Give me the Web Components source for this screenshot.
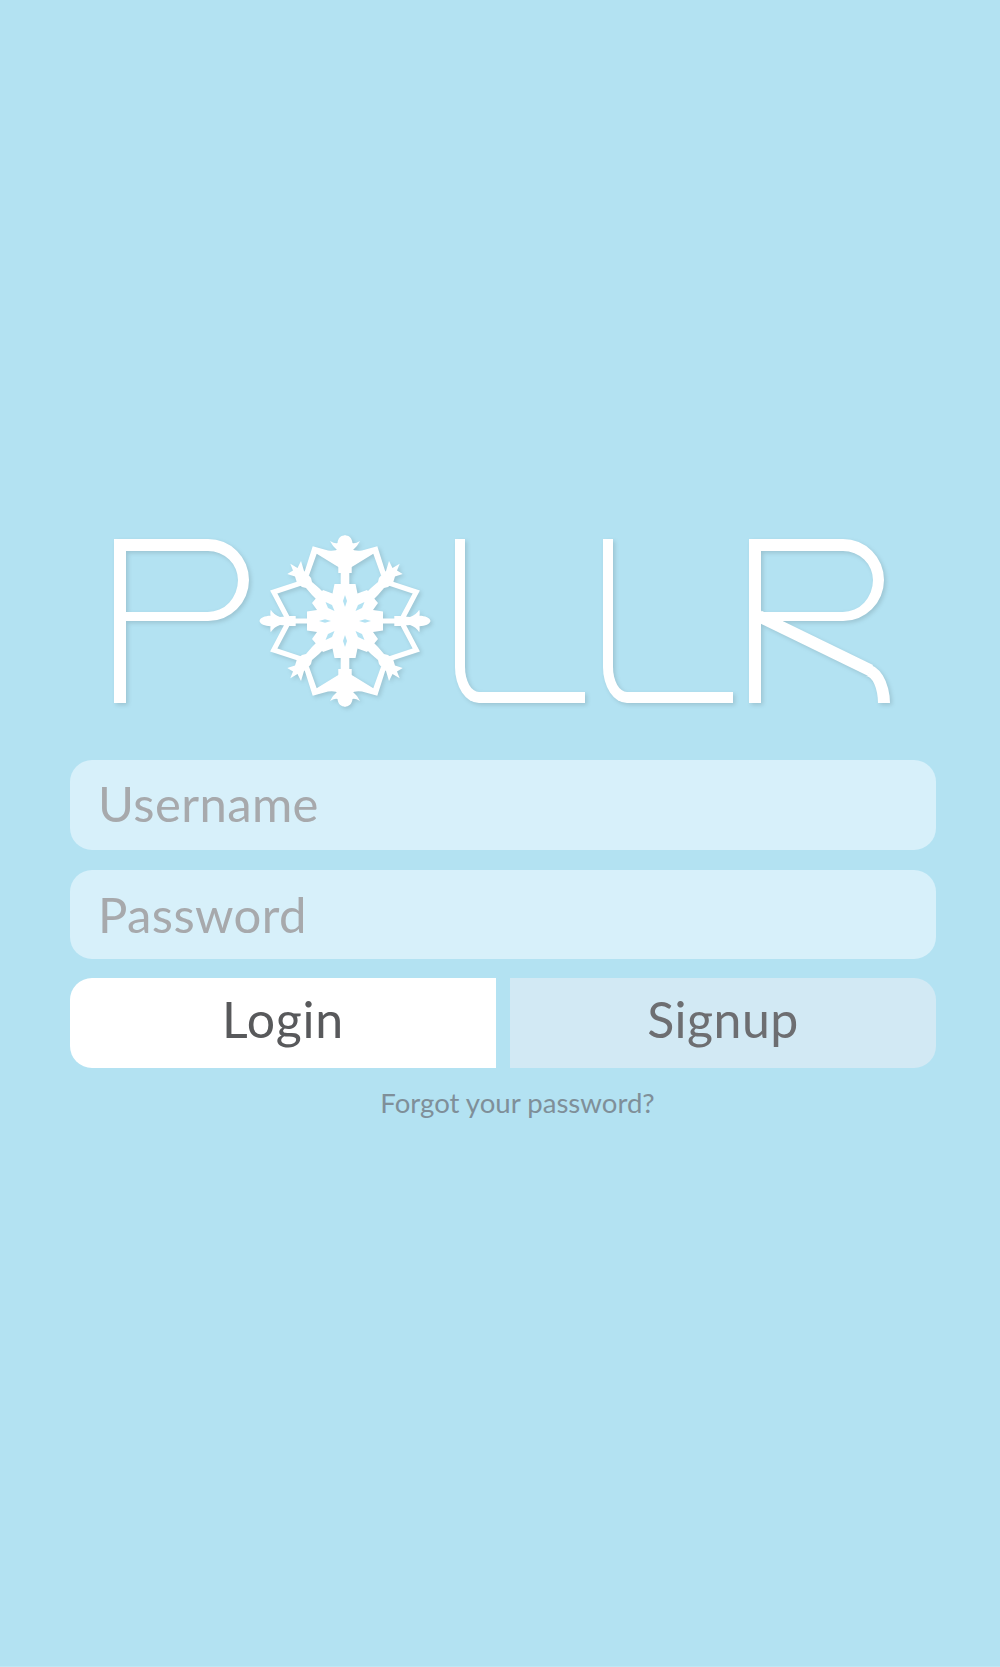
<!DOCTYPE html>
<html lang="en">
<head>
<meta charset="utf-8">
<title>Pollr</title>
<style>
  html, body { margin: 0; background: #b3e2f2; }
  body { font-family: "Lato", "Liberation Sans", sans-serif; }
</style>
</head>
<body>
<pollr-login>
  <pollr-logo slot="logo"></pollr-logo>
  <login-field>Username</login-field>
  <login-field class="second">Password</login-field>
  <login-buttons slot="buttons">
    <login-button class="primary" corner="left">Login</login-button>
    <login-button corner="right">Signup</login-button>
  </login-buttons>
  <forgot-link slot="forgot">Forgot your password?</forgot-link>
</pollr-login>

<script>
class PollrLogin extends HTMLElement {
  constructor(){
    super();
    this.attachShadow({mode: 'open'});
  }

  connectedCallback(){
    this.shadowRoot.innerHTML = `
      <style>
        :host {
          display: flex;
          flex-direction: column;
          box-sizing: border-box;
          width: 1000px;
          height: 1667px;
          padding: 535px 0 0 70px;
          background: #b3e2f2;
          border-bottom: 1px solid #bfe7f5;
          overflow: hidden;
        }
        ::slotted(login-field) {
          height: 90px;
          margin-top: 20px;
          padding-bottom: 5px;
        }
        ::slotted(login-field.second) {
          height: 89px;
          padding-bottom: 2px;
        }
      </style>
      <slot name="logo"></slot>
      <slot></slot>
      <slot name="buttons"></slot>
      <slot name="forgot"></slot>
    `;
  }
}

// the wordmark is custom artwork, built out of bordered boxes
class PollrLogo extends HTMLElement {
  constructor(){
    super();
    this.attachShadow({mode: 'open'});
  }

  connectedCallback(){
    this.shadowRoot.innerHTML = `
      <style>
        :host {
          display: flex;
          align-items: flex-start;
          height: 172px;
          margin: 0 0 33px 44px;
          filter: drop-shadow(2px 2px 2px rgba(0,0,0,.13));
        }
        .letter {
          position: relative;
          margin-top: 4px;
          height: 164px;
          flex: none;
        }
        .bowl {
          box-sizing: border-box;
          width: 135px;
          height: 82px;
          border: solid #fff;
          border-width: 12px 11px 9px 12px;
          border-radius: 0 41px 41px 0;
        }
        .stem {
          width: 12px;
          height: 82px;
          background: #fff;
        }
        .l {
          box-sizing: border-box;
          width: 130px;
          border-left: 10px solid #fff;
          border-bottom: 11px solid #fff;
          border-bottom-left-radius: 24px 36px;
        }
        .leg {
          position: absolute;
          left: -0.1px;
          top: 126.2px;
          width: 124px;
          height: 11.8px;
          background: #fff;
          transform-origin: 100% 0;
          transform: rotate(26deg);
        }
        .knee {
          position: absolute;
          box-sizing: border-box;
          left: 92.3px;
          top: 124.5px;
          width: 49px;
          height: 79px;
          border: 12px solid #fff;
          border-radius: 50%;
          clip-path: polygon(26px 12.7px, 31px 0, 49px 0, 49px 39.5px, 24.5px 39.5px, 24.5px 12.7px);
        }
        pollr-snowflake { margin: 0 24px 0 10px; }
        .l.first { margin-right: 18px; }
        .l.last { margin-right: 16px; }
      </style>
      <div class="letter" role="img" aria-label="P">
        <div class="bowl"></div>
        <div class="stem"></div>
      </div>
      <pollr-snowflake></pollr-snowflake>
      <div class="letter l first" role="img" aria-label="L"></div>
      <div class="letter l last" role="img" aria-label="L"></div>
      <div class="letter" role="img" aria-label="R">
        <div class="bowl"></div>
        <div class="stem"></div>
        <div class="leg"></div>
        <div class="knee"></div>
      </div>
    `;
  }
}

class PollrSnowflake extends HTMLElement {
  constructor(){
    super();
    this.attachShadow({mode: 'open'});
  }

  connectedCallback(){
    this.shadowRoot.innerHTML = `
      <style>
        :host {
          display: block;
          flex: none;
          width: 172px;
          height: 172px;
        }
        svg { display: block; }
      </style>
      <svg width="172" height="172" viewBox="-86 -86 172 172" role="img" aria-label="snowflake">
        <defs>
          <g id="quarter" fill="#fff">
            <polygon points="0.5,0.5 0.5,-37 -10.5,-37 -12.5,-27.5 -22,-31 -33,-18 -28,-11 -38,-9.5 -38,0.5"/>
            <path d="M0.5-85.7C-4-85.7-7-83-7.5-78Q-10-77-15-80-12-74-8-71L-6.7-54-6.7-48-4.3-48-4.3-35 0.5-35Z"/>
            <path d="M-85.3 0C-85.3-3-80-5.2-74.5-5.2Q-75-8-74.3-11.3-71-6-65-4L-54.3-5-49.3-5-49.3-2.5-36-2.5-36 0.5-85.3 0.5Z"/>
            <polygon points="-44,-60 -47.5,-53 -54.7,-57.3 -52,-50.5 -57.7,-47 -50,-44.5 -48,-38 -43,-34 -39,-33 -33,-26 -25,-18 -18,-25 -26,-33 -33,-39 -34,-43 -38,-48 -41,-50"/>
            <path d="M-32.3-74.7-17-70.5Q-10-69.5-6-72L-5-53-10-56-28.3-67.3-36-45.7-41-47.3Z"/>
            <polyline points="-42.7,-38.3 -71.3,-29 -57,-2" fill="none" stroke="#fff" stroke-width="5"/>
          </g>
        </defs>
        <use href="#quarter"/>
        <use href="#quarter" transform="scale(-1,1)"/>
        <use href="#quarter" transform="scale(1,-1)"/>
        <use href="#quarter" transform="scale(-1,-1)"/>
        <g fill="#b3e2f2">
          <polygon points="0,-26 2,-20 0,-14 -2,-20"/>
          <polygon points="0,26 2,20 0,14 -2,20"/>
          <polygon points="-26,0 -20,1.8 -14,0 -20,-1.8"/>
          <polygon points="26,0 20,1.8 14,0 20,-1.8"/>
          <polygon points="-19.5,-19 -13,-16 -10.5,-10 -17,-13"/>
          <polygon points="19.5,-19 13,-16 10.5,-10 17,-13"/>
          <polygon points="-19.5,19 -13,16 -10.5,10 -17,13"/>
          <polygon points="19.5,19 13,16 10.5,10 17,13"/>
        </g>
      </svg>
    `;
  }
}

class LoginField extends HTMLElement {
  constructor(){
    super();
    this.attachShadow({mode: 'open'});
  }

  connectedCallback(){
    this.shadowRoot.innerHTML = `
      <style>
        :host {
          display: flex;
          align-items: center;
          box-sizing: border-box;
          width: 866px;
          padding-left: 28px;
          background: #d7f0fa;
          border-radius: 22px;
          color: #a7a9ac;
          font-size: 49px;
          letter-spacing: .4px;
        }
      </style>
      <slot></slot>
    `;
  }
}

class LoginButtons extends HTMLElement {
  constructor(){
    super();
    this.attachShadow({mode: 'open'});
  }

  connectedCallback(){
    this.shadowRoot.innerHTML = `
      <style>
        :host {
          display: flex;
          gap: 14px;
          width: 866px;
          height: 90px;
          margin-top: 19px;
        }
      </style>
      <slot></slot>
    `;
  }
}

class LoginButton extends HTMLElement {
  constructor(){
    super();
    this.attachShadow({mode: 'open'});
  }

  connectedCallback(){
    this.shadowRoot.innerHTML = `
      <style>
        :host {
          display: flex;
          flex: 1;
          align-items: center;
          justify-content: center;
          box-sizing: border-box;
          padding-bottom: 8px;
          background: #d2e9f4;
          color: #6d6e71;
          font-size: 50px;
          letter-spacing: .5px;
        }
        :host([corner="left"]) { border-radius: 22px 0 0 22px; }
        :host([corner="right"]) { border-radius: 0 22px 22px 0; }
        :host(.primary) {
          background: #fff;
          color: #58595b;
          letter-spacing: .8px;
        }
      </style>
      <slot></slot>
    `;
  }
}

class ForgotLink extends HTMLElement {
  constructor(){
    super();
    this.attachShadow({mode: 'open'});
  }

  connectedCallback(){
    this.shadowRoot.innerHTML = `
      <style>
        :host {
          display: block;
          box-sizing: border-box;
          width: 866px;
          padding-left: 29px;
          margin-top: 18px;
          text-align: center;
          color: #7f8f99;
          font-size: 27.6px;
        }
      </style>
      <slot></slot>
    `;
  }
}

customElements.define('pollr-login', PollrLogin);
customElements.define('pollr-logo', PollrLogo);
customElements.define('pollr-snowflake', PollrSnowflake);
customElements.define('login-field', LoginField);
customElements.define('login-buttons', LoginButtons);
customElements.define('login-button', LoginButton);
customElements.define('forgot-link', ForgotLink);
</script>
</body>
</html>
